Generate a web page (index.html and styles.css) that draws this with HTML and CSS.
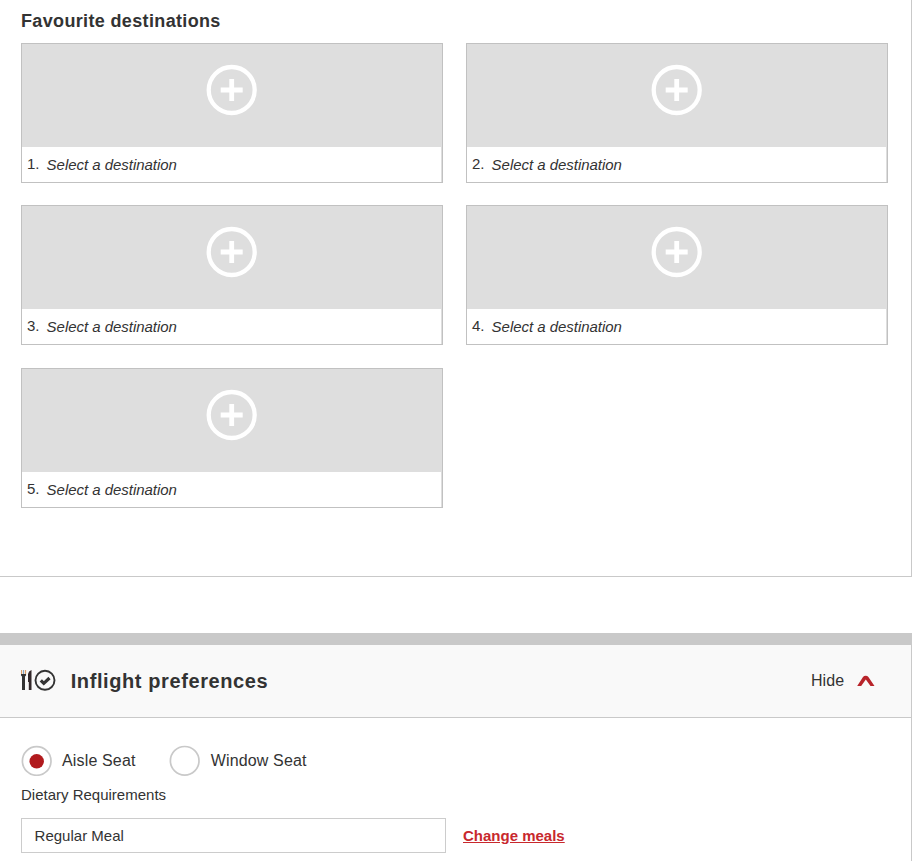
FILE: index.html
```html
<!DOCTYPE html>
<html lang="en">
<head>
<meta charset="utf-8">
<title>Preferences</title>
<link rel="stylesheet" href="styles.css">
</head>
<body>
<svg class="defs" width="0" height="0" aria-hidden="true">
  <symbol id="add" viewBox="0 0 52 52">
    <circle cx="25.700" cy="26" r="23" fill="none" stroke="#fff" stroke-width="4.300"/>
    <path d="M25.700 15v22M14.700 26h22" fill="none" stroke="#fff" stroke-width="4.800"/>
  </symbol>
</svg>
<section class="panel destinations">
  <h3 class="destinations-title">Favourite destinations</h3>
  <div class="grid">
    <div class="card"><div class="card-image"><svg class="add"><use href="#add"/></svg></div><div class="caption"><span class="number">1.</span><em>Select a destination</em></div></div>
    <div class="card"><div class="card-image"><svg class="add"><use href="#add"/></svg></div><div class="caption"><span class="number">2.</span><em>Select a destination</em></div></div>
    <div class="card"><div class="card-image"><svg class="add"><use href="#add"/></svg></div><div class="caption"><span class="number">3.</span><em>Select a destination</em></div></div>
    <div class="card"><div class="card-image"><svg class="add"><use href="#add"/></svg></div><div class="caption"><span class="number">4.</span><em>Select a destination</em></div></div>
    <div class="card last"><div class="card-image"><svg class="add"><use href="#add"/></svg></div><div class="caption"><span class="number">5.</span><em>Select a destination</em></div></div>
  </div>
</section>
<div class="band"></div>
<section class="inflight">
  <header class="inflight-header">
    <svg class="meal-icon" viewBox="0 0 36 24">
      <path d="M.5 2v5M4.500 2v5" stroke="#dd9f68" stroke-width="1.200"/>
      <path d="M2.500 2v5" stroke="#8aa6bd" stroke-width="1.200"/>
      <path d="M0 6h5v1.500L4 8.500V22H1V8.500L0 7.500z" fill="#333"/>
      <path d="M10.500 2v20H7.800v-8H7V6q.5-3 3.500-4z" fill="#33282a"/>
      <circle cx="24" cy="12.300" r="9.500" fill="none" stroke="#333" stroke-width="1.900"/>
      <path d="M19.800 12.300l3 3 5.700-5.300" fill="none" stroke="#333" stroke-width="3.200"/>
    </svg>
    <h2 class="inflight-title">Inflight preferences</h2>
    <span class="hide">Hide</span>
    <svg class="chevron" viewBox="0 0 18 12"><path d="M.2 11L6 2Q7 .8 8.700 .8T11.400 2L17.500 11H13.500L8.800 4.600L4.200 11z" fill="#b8242a"/></svg>
  </header>
  <div class="inflight-body">
    <div class="seats">
      <svg class="radio" viewBox="0 0 31 31"><circle cx="15.700" cy="16" r="14.300" fill="none" stroke="#c9c9c9" stroke-width="1.700"/><circle cx="15.700" cy="16.300" r="7.200" fill="#b11a1d"/></svg><span class="seat-label aisle">Aisle Seat</span>
      <svg class="radio" viewBox="0 0 31 31"><circle cx="15.700" cy="15.800" r="14.300" fill="none" stroke="#c9c9c9" stroke-width="1.700"/></svg><span class="seat-label window">Window Seat</span>
    </div>
    <div class="diet-label">Dietary Requirements</div>
    <div class="meal-row">
      <div class="meal-field">Regular Meal</div>
      <a class="change" href="#">Change meals</a>
    </div>
  </div>
</section>
</body>
</html>
```
FILE: styles.css
```css
* { box-sizing: border-box; }
body {
  margin: 0;
  height: 861px;
  overflow: hidden;
  background: #fff;
  color: #333;
  font-family: "Liberation Sans", Arial, sans-serif;
}
h2, h3 { margin: 0; }
svg { display: block; flex: none; }
.defs { position: absolute; }
.panel {
  height: 577px;
  padding: 11px 23px 0 21px;
  border-right: 1px solid #c9c9c9;
  border-bottom: 1px solid #c9c9c9;
}
.destinations-title {
  height: 32px;
  font-size: 18px;
  line-height: 21px;
  letter-spacing: .35px;
}
.grid {
  display: grid;
  grid-template-columns: 422px 422px;
  column-gap: 23px;
  row-gap: 22px;
}
.card {
  height: 140px;
  border: 1px solid #c1c1c1;
  background: #dedede;
}
.card.last { margin-top: 1px; }
.card-image {
  height: 103px;
  padding-top: 20px;
}
.add {
  width: 52px;
  height: 52px;
  margin: 0 auto;
}
.caption {
  display: flex;
  height: 35px;
  width: 419px;
  padding-left: 5px;
  background: #fff;
  font-size: 15px;
  line-height: 35px;
  letter-spacing: -.03px;
}
.number { width: 19.6px; line-height: 34px; }
.band {
  height: 12px;
  margin-top: 56px;
  background: #c9c9c9;
}
.inflight {
  height: 216px;
  border-right: 1px solid #c9c9c9;
}
.inflight-header {
  display: flex;
  align-items: center;
  height: 73px;
  padding: 0 36px 0 21px;
  background: #f9f9f9;
  border-bottom: 1px solid #c9c9c9;
}
.meal-icon { width: 36px; height: 24px; margin-top: -2px; }
.inflight-title {
  margin-left: 13.7px;
  font-size: 20px;
  line-height: 24px;
  letter-spacing: .6px;
}
.hide {
  margin-left: auto;
  margin-right: 12.6px;
  font-size: 16px;
  line-height: 20px;
  letter-spacing: .15px;
}
.chevron { width: 18px; height: 12px; margin-top: -1px; }
.inflight-body { padding: 27px 0 0 21px; }
.seats {
  display: flex;
  height: 32px;
}
.radio {
  width: 31px;
  height: 31px;
}
.seat-label {
  margin-left: 10px;
  font-size: 16px;
  line-height: 31px;
  letter-spacing: .15px;
}
.aisle { width: 107px; }
.window { margin-left: 10.7px; }
.diet-label {
  height: 41px;
  font-size: 15px;
  line-height: 35px;
}
.meal-row { display: flex; }
.meal-field {
  width: 425px;
  height: 35px;
  padding-left: 12.6px;
  border: 1px solid #ccc;
  font-size: 15px;
  line-height: 33px;
}
.change {
  margin-left: 17px;
  color: #c8282d;
  font-size: 15px;
  font-weight: bold;
  line-height: 35px;
}
```
